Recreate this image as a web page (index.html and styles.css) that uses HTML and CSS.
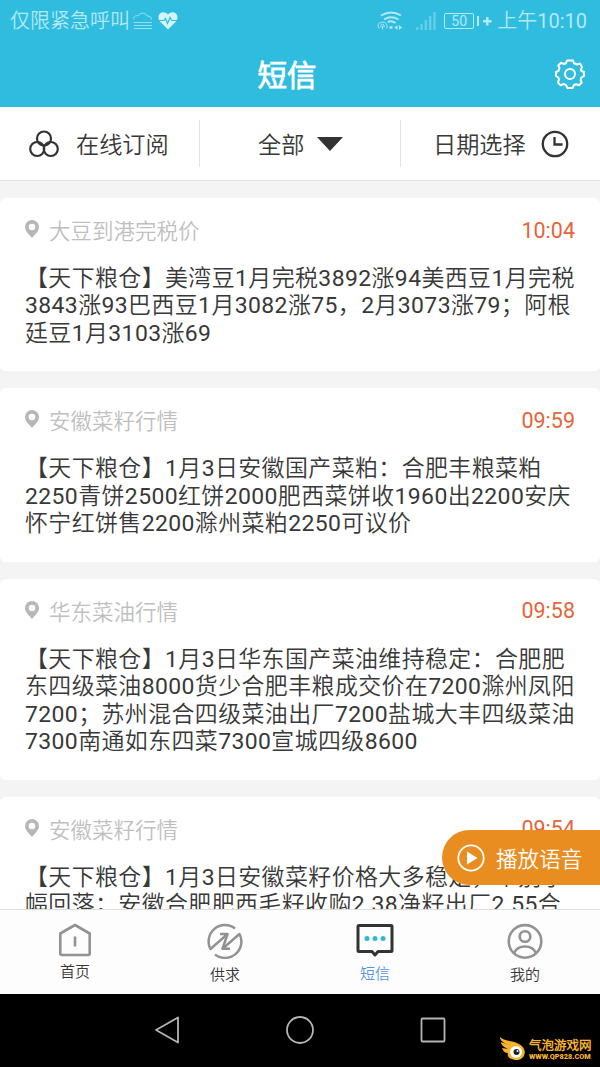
FILE: index.html
```html
<!DOCTYPE html>
<html lang="zh-CN">

<head>
    <meta charset="UTF-8">
    <meta name="viewport" content="width=device-width, initial-scale=1.0">
    <title>短信</title>
    <link rel="stylesheet" href="styles.css">
</head>

<body>
    <header class="header">
        <div class="status-bar">
            <div class="status-left">
                <span>仅限紧急呼叫</span>
                <svg class="icon-cloud" width="20" height="18" viewBox="0 0 20 18" fill="none" stroke="currentColor">
                    <path d="M.5 7.500C.5 4.500 3 3 5 4C6.500 .5 12.500 0 14 4C17 4 18.500 5 18.500 7.500M1 10.500H19M1 13.500H19M1 16.500H19" stroke-width=".8" />
                </svg>
                <svg class="icon-heart" width="20" height="18" viewBox="0 0 20 18">
                    <path d="M10 17.500L2.500 10C-3.500 3 5-3.500 10 2.500C15-3.500 23.500 3 17.500 10Z" fill="currentColor" />
                    <path d="M1 8.500H6L7.500 6.500L9.500 11.500L12 5.500L13.500 8.500H19" fill="none" stroke="#2fbcdf" stroke-width="1.200" />
                </svg>
            </div>
            <div class="status-right">
                <svg width="26" height="20" viewBox="0 0 26 20" fill="none" stroke="currentColor">
                    <path d="M4 4.500Q14-1.500 24 4.500M7 8.500Q14 4 21.500 8.500M10.500 11Q14.500 9 18.500 12" stroke-width="1.900" />
                    <path d="M2 17.500Q-.5 13 3.500 11.500Q8 10 10 14Q10.500 16 9.500 17.500M4 16.500Q3 13.500 5.500 13.200Q8 13.500 7 16.500M5.500 15V18.500" stroke-width="1" />
                    <path d="M12.500 16.500H15.500" stroke-width="2.500" />
                    <path d="M17.500 16.500L20.500 14V19ZM25 16.500L22 14V19Z" fill="currentColor" stroke="none" />
                </svg>
                <svg class="icon-signal" width="20" height="19" viewBox="0 0 20 19" fill="currentColor">
                    <path d="M0 16H2.500V19H0ZM4.300 13H6.800V19H4.300ZM8.600 9H11.100V19H8.600ZM12.900 5H15.400V19H12.900ZM17.200 1H19.700V19H17.200Z" />
                </svg>
                <div class="battery">50</div>
                <svg class="icon-charge" width="16" height="16" viewBox="0 0 16 16" fill="currentColor">
                    <path d="M1 3H3V13H1ZM7 7H10V4H12.500V7H15.500V9.500H12.500V12.500H10V9.500H7Z" />
                </svg>
                <span class="clock">上午10:10</span>
            </div>
        </div>
        <div class="title-bar">
            <h1>短信</h1>
            <svg class="icon-gear" width="32" height="32" viewBox="0 0 32 32" fill="none" stroke="#fff" stroke-width="2" stroke-linejoin="round">
                <path d="M13 2.500H19L20 5.300L23 6.500L26 5.500L28 9L26.800 12L27.500 13L30 14V18L27.400 19.500L26.600 22L27.700 24.500L25 27.300L22 26.200L20 27L18.500 30H13.500L12 27L9.500 26L6.500 27.300L4 24.500L5 21.500L4.300 19.500L2 18V14L4.500 12.800L5.500 10L4.300 7.500L7 4.800L10 6L12 5.200Z" />
                <circle cx="16" cy="16" r="5" />
            </svg>
        </div>
    </header>

    <nav class="filters">
        <div class="filter filter-subscribe">
            <svg width="30" height="28" viewBox="0 0 30 28" fill="none" stroke="#333" stroke-width="2.200">
                <circle cx="15" cy="8.500" r="7" />
                <circle cx="8.200" cy="19" r="7" />
                <circle cx="21.800" cy="19" r="7" />
            </svg>
            <span>在线订阅</span>
        </div>
        <div class="filter filter-all">
            <span>全部</span>
            <svg width="26" height="14" viewBox="0 0 26 14">
                <path d="M0 0H26L13 14Z" fill="#333" />
            </svg>
        </div>
        <div class="filter filter-date">
            <span>日期选择</span>
            <svg width="28" height="28" viewBox="0 0 28 28" fill="none" stroke="#333" stroke-width="2.300">
                <circle cx="14" cy="14" r="12.200" />
                <path d="M13.500 7V14.500H21.500" />
            </svg>
        </div>
    </nav>

    <main class="message-list">
        <article class="card">
            <div class="card-head">
                <svg class="pin" width="16" height="20" viewBox="0 0 16 20"><path d="M8 19C5.500 15.500 1 12.500 1 8A7 7 0 0 1 15 8C15 12.500 10.500 15.500 8 19Z" /><circle cx="8" cy="8" r="3.300" /></svg>
                <span class="card-name">大豆到港完税价</span>
                <span class="card-time">10:04</span>
            </div>
            <p class="card-text">【天下粮仓】美湾豆1月完税3892涨94美西豆1月完税<br>3843涨93巴西豆1月3082涨75，2月3073涨79；阿根<br>廷豆1月3103涨69</p>
        </article>

        <article class="card">
            <div class="card-head">
                <svg class="pin" width="16" height="20" viewBox="0 0 16 20"><path d="M8 19C5.500 15.500 1 12.500 1 8A7 7 0 0 1 15 8C15 12.500 10.500 15.500 8 19Z" /><circle cx="8" cy="8" r="3.300" /></svg>
                <span class="card-name">安徽菜籽行情</span>
                <span class="card-time">09:59</span>
            </div>
            <p class="card-text">【天下粮仓】1月3日安徽国产菜粕：合肥丰粮菜粕<br>2250青饼2500红饼2000肥西菜饼收1960出2200安庆<br>怀宁红饼售2200滁州菜粕2250可议价</p>
        </article>

        <article class="card">
            <div class="card-head">
                <svg class="pin" width="16" height="20" viewBox="0 0 16 20"><path d="M8 19C5.500 15.500 1 12.500 1 8A7 7 0 0 1 15 8C15 12.500 10.500 15.500 8 19Z" /><circle cx="8" cy="8" r="3.300" /></svg>
                <span class="card-name">华东菜油行情</span>
                <span class="card-time">09:58</span>
            </div>
            <p class="card-text">【天下粮仓】1月3日华东国产菜油维持稳定：合肥肥<br>东四级菜油8000货少合肥丰粮成交价在7200滁州凤阳<br>7200；苏州混合四级菜油出厂7200盐城大丰四级菜油<br>7300南通如东四菜7300宣城四级8600</p>
        </article>

        <article class="card">
            <div class="card-head">
                <svg class="pin" width="16" height="20" viewBox="0 0 16 20"><path d="M8 19C5.500 15.500 1 12.500 1 8A7 7 0 0 1 15 8C15 12.500 10.500 15.500 8 19Z" /><circle cx="8" cy="8" r="3.300" /></svg>
                <span class="card-name">安徽菜籽行情</span>
                <span class="card-time">09:54</span>
            </div>
            <p class="card-text">【天下粮仓】1月3日安徽菜籽价格大多稳定，个别小<br>幅回落；安徽合肥肥西毛籽收购2.38净籽出厂2.55合</p>
        </article>

        <button class="btn-play" type="button">
            <svg width="28" height="28" viewBox="0 0 28 28">
                <circle cx="14" cy="14" r="12.700" fill="none" stroke="#fff" stroke-width="1.800" />
                <path d="M10 7.500L20.500 14L10 20.500Z" fill="#fff" />
            </svg>
            <span>播放语音</span>
        </button>
    </main>

    <nav class="tab-bar">
        <a class="tab tab-home">
            <svg width="40" height="38" viewBox="0 0 40 38" fill="none" stroke="#929292" stroke-width="2.600" stroke-linejoin="round">
                <path d="M5.300 12.500L20 4L34.700 12.500V32.500Q34.700 34 33.200 34H6.800Q5.300 34 5.300 32.500ZM20 15.500V25.500" />
            </svg>
            <span>首页</span>
        </a>
        <a class="tab">
            <svg width="40" height="38" viewBox="0 0 40 38" fill="none" stroke="#929292" stroke-width="2.500" stroke-linejoin="round">
                <path d="M30 7.600A16.300 16.300 0 0 0 5.500 28L22.500 13H15" />
                <path d="M10 33.400A16.300 16.300 0 0 0 34.500 13L17.500 27.800H25" />
                <path d="M22.500 13L17.500 27.800" />
            </svg>
            <span>供求</span>
        </a>
        <a class="tab active">
            <svg width="40" height="38" viewBox="0 0 40 38">
                <path d="M4 4.500H36Q37 4.500 37 5.500V29.500Q37 30.500 36 30.500H23L20 34L17 30.500H4Q3 30.500 3 29.500V5.500Q3 4.500 4 4.500Z" fill="none" stroke="#333" stroke-width="3" stroke-linejoin="round" />
                <g fill="#35b5d3">
                    <circle cx="12" cy="17.500" r="2.500" />
                    <circle cx="20" cy="17.500" r="2.500" />
                    <circle cx="28" cy="17.500" r="2.500" />
                </g>
            </svg>
            <span>短信</span>
        </a>
        <a class="tab">
            <svg width="40" height="38" viewBox="0 0 40 38" fill="none" stroke="#929292" stroke-width="2.600">
                <circle cx="20" cy="20.400" r="16.300" />
                <circle cx="20" cy="15.500" r="5.300" />
                <path d="M9 32Q12 25.500 20 25.500T31 32" />
            </svg>
            <span>我的</span>
        </a>
    </nav>

    <footer class="system-nav">
        <svg width="28" height="30" viewBox="0 0 28 30"><path d="M25 2.500V27.500L3 15Z" /></svg>
        <svg width="28" height="30" viewBox="0 0 28 30"><circle cx="14" cy="15" r="13" /></svg>
        <svg width="28" height="30" viewBox="0 0 28 30"><rect x="2.500" y="3.500" width="23" height="23" rx="1" /></svg>
        <div class="watermark">
            <svg width="27" height="24" viewBox="0 0 27 24">
                <path d="M0 0C5 5 12 3 19 7C29 12 25 24 15 23C8 22 7 18 8 16C5 16 3 14 2 11L8 12C4 10 1 8 1 5L9 8C4 6 0 4 0 0Z" fill="#f8b32c" />
                <circle cx="16" cy="15" r="6" fill="#fff" />
                <circle cx="16.500" cy="15" r="3" fill="#222" />
                <circle cx="17.500" cy="14" r="1" fill="#fff" />
            </svg>
            <div class="watermark-text">
                <strong>气泡游戏网</strong>
                <small>WWW.QP828.COM</small>
            </div>
        </div>
    </footer>
</body>

</html>
```
FILE: styles.css
```css
:root {
    --primary-color: #2fbcdf;
    --background-color: #f4f4f4;
    --text-color: #383838;
    --time-color: #e8633a;
    --white: #ffffff;
}

* {
    box-sizing: border-box;
    margin: 0;
    padding: 0;
}

body {
    width: 600px;
    height: 1067px;
    display: flex;
    flex-direction: column;
    overflow: hidden;
    font-family: Roboto, "Noto Sans CJK SC DemiLight", "Noto Sans CJK SC Light", "Noto Sans CJK SC", sans-serif;
    color: var(--text-color);
    background-color: var(--background-color);
    white-space: nowrap;
}

svg {
    display: block;
    flex-shrink: 0;
}

.header {
    height: 107px;
    flex-shrink: 0;
    background-color: var(--primary-color);
}

.status-bar {
    height: 40px;
    padding: 1px 13px 0 10px;
    display: flex;
    justify-content: space-between;
    color: #b4e9f6;
    font-size: 20px;
    line-height: 40px;
}

.status-left,
.status-right {
    display: flex;
    align-items: center;
}

.icon-cloud {
    margin-left: 3px;
}

.icon-heart {
    margin-left: 5px;
    color: #d3f4fb;
}

.icon-signal {
    margin-left: 13px;
    opacity: 0.4;
}

.battery {
    width: 30px;
    height: 16px;
    margin-left: 8px;
    border: 1px solid currentColor;
    border-radius: 2px;
    font-size: 14px;
    line-height: 15px;
    text-align: center;
}

.icon-charge {
    margin-left: 2px;
}

.clock {
    margin-left: 5px;
}

.title-bar {
    height: 67px;
    padding: 0 14px 0 20px;
    display: flex;
    align-items: center;
    color: var(--white);
}

.title-bar h1 {
    flex: 1;
    padding-top: 4px;
    font-size: 29.5px;
    font-weight: 700;
    line-height: 40px;
    text-align: center;
}

.filters {
    height: 74px;
    flex-shrink: 0;
    display: flex;
    align-items: center;
    background-color: var(--white);
    border-bottom: 1px solid #e2e2e2;
    font-size: 23.2px;
}

.filter {
    width: 200px;
    height: 47px;
    display: flex;
    align-items: center;
}

.filter span {
    padding-bottom: 2px;
}

.filter + .filter {
    border-left: 1px solid #e2e2e2;
}

.filter-subscribe {
    padding-left: 29px;
    gap: 17px;
    width: 199px;
}

.filter-all {
    padding-left: 58px;
    gap: 13px;
    width: 201px;
}

.filter-date {
    padding-left: 32px;
    gap: 15px;
}

.message-list {
    position: relative;
    flex: 1;
    min-height: 0;
    padding-top: 17px;
    display: flex;
    flex-direction: column;
    gap: 17px;
    overflow: hidden;
}

.card {
    flex-shrink: 0;
    padding: 17px 25px 24.6px;
    background-color: var(--white);
    border-radius: 6px;
}

.card-head {
    height: 30px;
    margin-bottom: 20px;
    display: flex;
    align-items: center;
    font-size: 21.5px;
}

.pin {
    margin-right: 9px;
    margin-left: -1px;
    margin-top: -2px;
    fill: #b7b7b7;
}

.pin circle {
    fill: var(--white);
}

.card-name {
    flex: 1;
    padding-bottom: 1px;
    color: #bfbfbf;
}

.card-time {
    color: var(--time-color);
}

.card-text {
    font-size: 22.95px;
    letter-spacing: 0.4px;
    line-height: 27.3px;
}

.btn-play {
    position: absolute;
    right: 0;
    bottom: 24px;
    width: 158px;
    height: 55px;
    padding-left: 15px;
    display: flex;
    align-items: center;
    gap: 11px;
    border: none;
    border-radius: 27.5px 0 0 27.5px;
    background-color: #e98d20;
    color: var(--white);
    font: inherit;
    font-size: 21.6px;
}

.tab-bar {
    height: 85px;
    flex-shrink: 0;
    display: flex;
    background-color: #fdfdfd;
    border-top: 1px solid #dedede;
}

.tab {
    flex: 1;
    padding-top: 11px;
    display: flex;
    flex-direction: column;
    align-items: center;
    gap: 5px;
    font-size: 15px;
    line-height: 22px;
}

.tab-home {
    gap: 2px;
}

.tab.active {
    gap: 4px;
    color: #5595d8;
}

.system-nav {
    position: relative;
    height: 73px;
    flex-shrink: 0;
    padding-bottom: 1px;
    display: flex;
    align-items: center;
    justify-content: center;
    gap: 105px;
    background-color: #000;
}

.system-nav > svg {
    fill: none;
    stroke: #b5b5b5;
    stroke-width: 1.8;
    stroke-linejoin: round;
}

/* site logo over the corner of the system bar */
.watermark {
    position: absolute;
    right: 9px;
    bottom: 6px;
    display: flex;
    align-items: center;
    gap: 2px;
    color: #f8b32c;
}

.watermark-text {
    width: 62px;
    display: flex;
    flex-direction: column;
}

.watermark strong {
    font-size: 12.5px;
    font-weight: 900;
    line-height: 15px;
}

.watermark small {
    font-size: 7.3px;
    font-weight: 900;
    line-height: 8px;
}
```
